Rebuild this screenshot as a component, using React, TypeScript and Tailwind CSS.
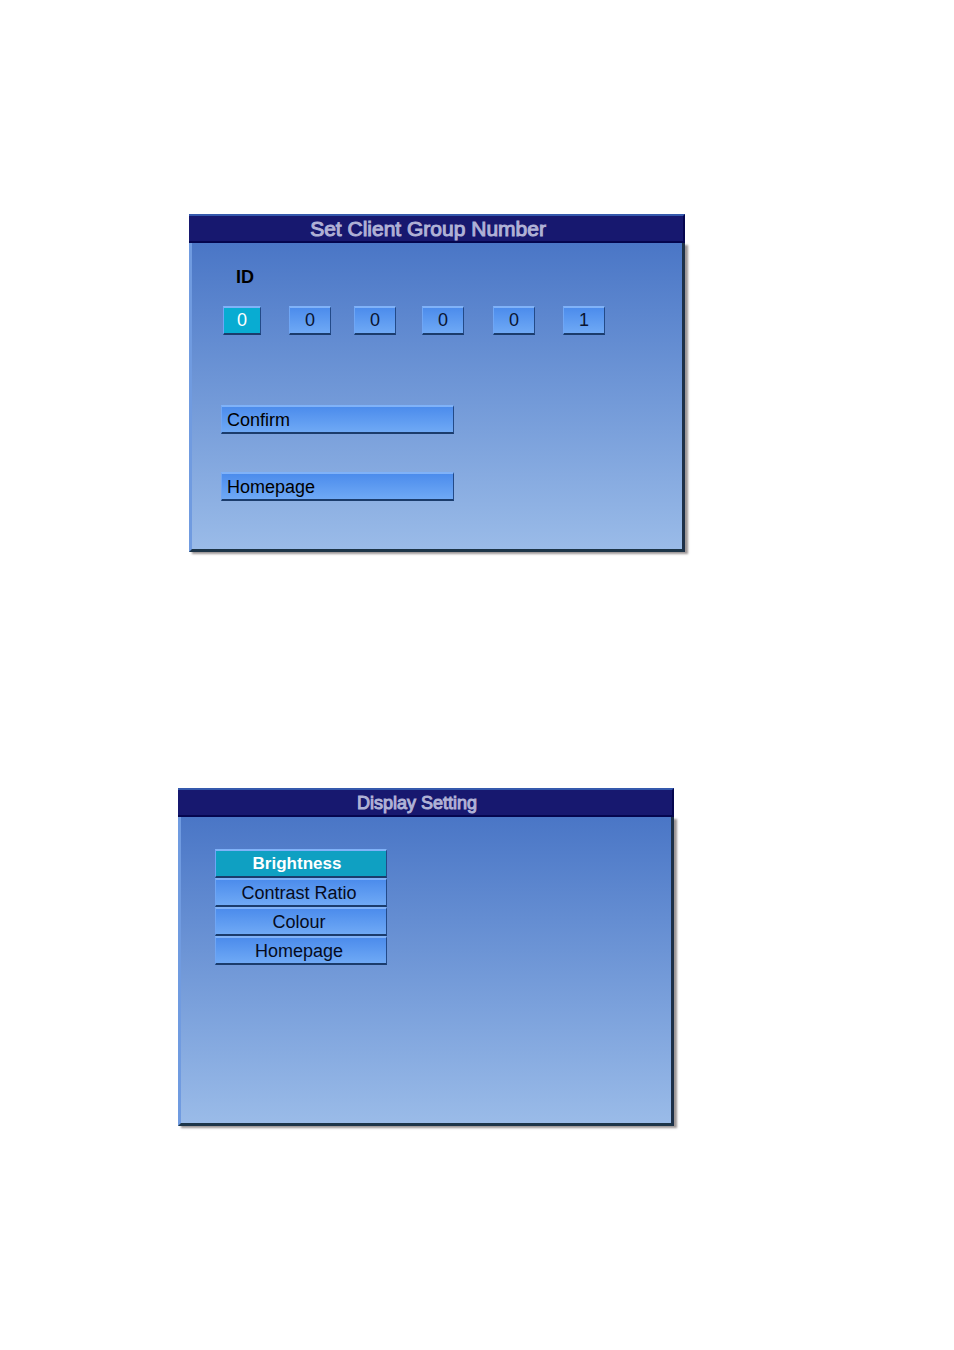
import { useState } from "react";
import { clsx } from "clsx";

interface PanelProps {
  title: string;
  titleClass: string;
  className: string;
  children: React.ReactNode;
}

const bevel = "border border-t-2 border-t-[#80b2f8] border-l-[#6fa6f5] border-r-[#234a88] border-b-2 border-b-[#1b3c6c]";

const digits = [
  { value: "0", spacing: "" },
  { value: "0", spacing: "ml-7" },
  { value: "0", spacing: "ml-[23px]" },
  { value: "0", spacing: "ml-[26px]" },
  { value: "0", spacing: "ml-[29px]" },
  { value: "1", spacing: "ml-7" },
];

const menuItems = ["Brightness", "Contrast Ratio", "Colour", "Homepage"];

function Panel({ title, titleClass, className, children }: PanelProps) {
  return (
    <section className={clsx("w-[52%]", className)}>
      <header className="border-t-2 border-b-2 border-r-2 border-t-[#3559ad] border-b-[#05064f] border-r-[#05064f] bg-[#17186f]">
        <h2 className={clsx("pt-px text-center leading-6 text-[#b0b2d6] [-webkit-text-stroke:1px_#b0b2d6]", titleClass)}>{title}</h2>
      </header>
      <div className="border-l-3 border-r-3 border-b-3 border-l-[#709be0] border-r-[#1d3048] border-b-[#1d3548] bg-linear-to-b from-[#4a76c6] to-[#9abbe8] shadow-[3px_2px_2px_rgba(90,80,80,0.6)]">
        {children}
      </div>
    </section>
  );
}

function ClientGroupPanel() {
  const [values, setValues] = useState(digits.map((d) => d.value));
  const [active, setActive] = useState(0);

  const update = (index: number, value: string) => {
    setValues(values.map((v, i) => (i === index ? value : v)));
  };

  return (
    <Panel title="Set Client Group Number" titleClass="pr-4 text-[21px]" className="ml-[189px]">
      <form className="pt-5 pb-12 pl-[29px]" onSubmit={(e) => e.preventDefault()}>
        <fieldset>
          <legend className="pl-[15px] text-[18px] leading-7 font-bold text-black">ID</legend>
          <div className="mt-[15px] flex pl-[2px]">
            {values.map((value, i) => (
              <input
                key={i}
                type="text"
                inputMode="numeric"
                maxLength={1}
                aria-label={`ID digit ${i + 1}`}
                value={value}
                onFocus={() => setActive(i)}
                onChange={(e) => update(i, e.target.value)}
                className={clsx(
                  "h-[29px] rounded-none text-center text-[18px] outline-none",
                  bevel,
                  digits[i].spacing,
                  i === active
                    ? "w-[38px] bg-[#08acd2] text-white"
                    : "w-[42px] bg-linear-to-b from-[#4c8cec] to-[#6fa9f5] text-[#0a1430]",
                )}
              />
            ))}
          </div>
        </fieldset>
        <div className="mt-[70px] flex w-[233px] flex-col gap-[38px]">
          {["Confirm", "Homepage"].map((label) => (
            <button
              key={label}
              type="submit"
              className={clsx("h-[29px] bg-linear-to-b from-[#4c8cec] to-[#6fa9f5] pl-[5px] text-left text-[18px] leading-6 text-black", bevel)}
            >
              {label}
            </button>
          ))}
        </div>
      </form>
    </Panel>
  );
}

function DisplayPanel() {
  const [selected, setSelected] = useState("Brightness");

  return (
    <Panel title="Display Setting" titleClass="pr-4 text-[18px]" className="mt-[236px] ml-[178px]">
      <nav className="flex w-[206px] flex-col pt-8 pb-[158px] pl-[34px]">
        {menuItems.map((item) => (
          <button
            key={item}
            type="button"
            onClick={() => setSelected(item)}
            className={clsx(
              "h-[29px] text-center leading-6",
              bevel,
              item === selected
                ? "bg-[#0fa0c2] pr-2 text-[17px] font-bold text-white"
                : "bg-linear-to-b from-[#4c8cec] to-[#6fa9f5] pr-1 text-[18px] text-[#050b20]",
            )}
          >
            {item}
          </button>
        ))}
      </nav>
    </Panel>
  );
}

export default function App() {
  return (
    <main className="min-h-screen bg-white pt-[214px] font-['Liberation_Sans',Arial,sans-serif]">
      <ClientGroupPanel />
      <DisplayPanel />
    </main>
  );
}
